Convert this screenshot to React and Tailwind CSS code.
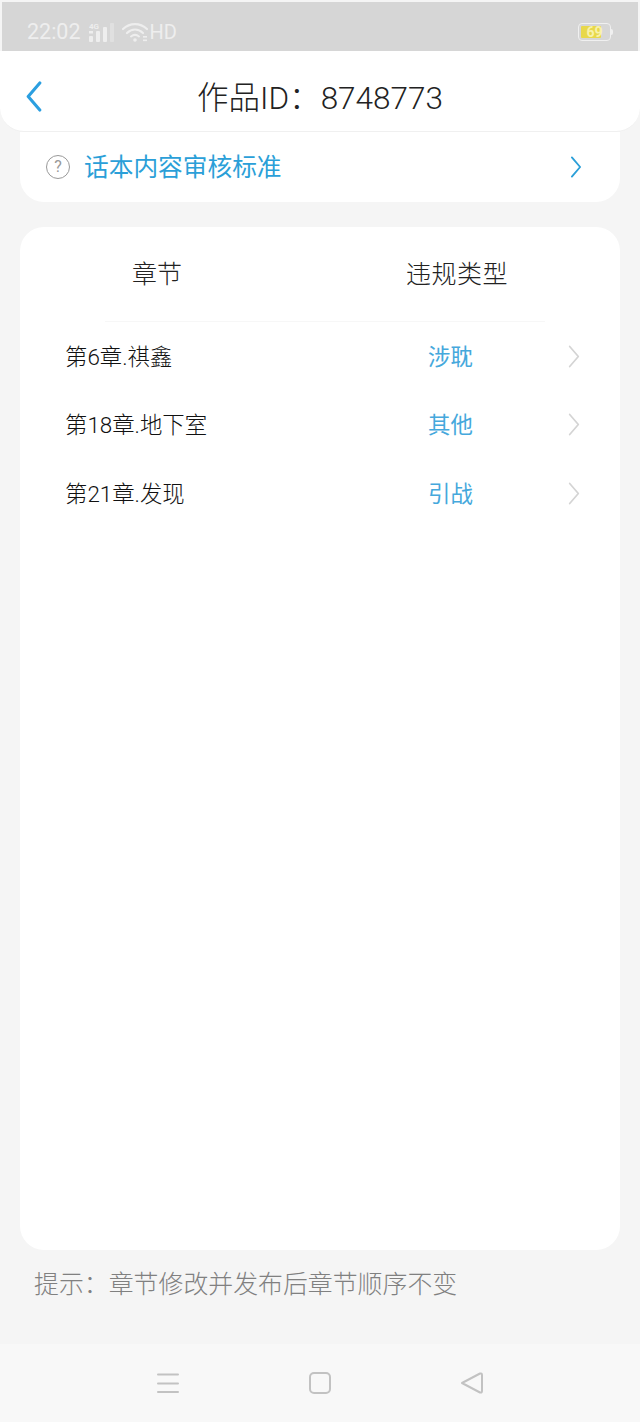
const CJK = "font-['Roboto','Noto_Sans_CJK_SC',sans-serif]";
const COLON = "\uFF1A"; // full-width colon

const rows = [
  { name: "第6章.祺鑫", type: "涉耽" },
  { name: "第18章.地下室", type: "其他" },
  { name: "第21章.发现", type: "引战" },
];

const Chevron = ({ className, dir = "right", width = 2 }) => (
  <svg viewBox="0 0 12 24" fill="none" className={className}>
    <path
      d={dir === "right" ? "M1.5 1.5 L10.5 12 L1.5 22.5" : "M10.5 1.5 L1.5 12 L10.5 22.5"}
      stroke="currentColor"
      strokeWidth={width}
      strokeLinecap="round"
      strokeLinejoin="round"
    />
  </svg>
);

const StatusBar = () => (
  <div className="mx-[2px] mt-[2px] flex h-[49px] items-center justify-between bg-[#d6d6d6] pl-[25px] pr-[25px] pt-[11px] text-[#eeeeee]">
    <div className="flex items-center">
      <span className="text-[21.5px] leading-none">22:02</span>
      <svg viewBox="0 0 26 20" className="ml-[8px] h-[20px] w-[26px]">
        <text x="0" y="7" fontSize="8" fontWeight="700" fill="currentColor" fontFamily="Roboto">4G</text>
        <rect x="0" y="9" width="4" height="2.5" fill="currentColor" />
        <rect x="0" y="14" width="4" height="6" rx="1" fill="currentColor" />
        <rect x="7" y="9" width="4" height="11" rx="1" fill="currentColor" />
        <rect x="14" y="5" width="4" height="15" rx="1" fill="currentColor" />
        <rect x="21" y="1" width="4" height="19" rx="1" fill="currentColor" opacity="0.45" />
      </svg>
      <svg viewBox="0 0 26 20" fill="none" className="ml-[7px] h-[20px] w-[26px]">
        <path d="M1 7 C8 0.5 18 0.5 25 7" stroke="currentColor" strokeWidth="2.2" strokeLinecap="round" />
        <path d="M5 11 C10 6.5 16 6.5 21 11" stroke="currentColor" strokeWidth="2.2" strokeLinecap="round" />
        <path d="M9 14.5 C11.5 12.5 14.5 12.5 17 14.5" stroke="currentColor" strokeWidth="2" strokeLinecap="round" />
        <circle cx="13" cy="18" r="1.8" fill="currentColor" />
        <rect x="21" y="14" width="4" height="1.6" fill="currentColor" />
        <rect x="21" y="17.5" width="4" height="1.6" fill="currentColor" />
      </svg>
      <span className="ml-[2px] text-[20px] leading-none">HD</span>
    </div>
    <div className="flex items-center">
      <div className="relative flex h-[18px] w-[33px] items-center justify-center overflow-hidden rounded-[4px] border border-[#f0f0f0]">
        <div className="absolute inset-y-[2px] left-[2px] w-[20px] rounded-[1px] bg-[#e8d84a]" />
        <span className="relative text-[14px] font-bold leading-none text-[#f8f2a8]">69</span>
      </div>
      <div className="h-[6px] w-[2px] rounded-r-sm bg-[#f0f0f0]" />
    </div>
  </div>
);

const Header = () => (
  <div className="relative z-10 flex h-[81px] items-center justify-center rounded-b-[24px] border-b border-[#f0f0f0] bg-white">
    <Chevron dir="left" width={2.4} className="absolute left-[25px] top-[30px] h-[31px] w-[18px] text-[#2b9fe0]" />
    <span className="pt-[15px] text-[31.5px] font-light leading-none text-[#222222]">作品ID{COLON}8748773</span>
  </div>
);

const NavBar = () => (
  <div className="mt-auto flex h-[78px] items-center justify-between bg-[#f8f8f8] pl-[156px] pr-[156px] text-[#c2c2c2]">
    <svg viewBox="0 0 24 22" fill="none" className="h-[22px] w-[24px]">
      <path d="M2 2.5 H22 M2 11.5 H22 M2 20 H22" stroke="currentColor" strokeWidth="2" strokeLinecap="round" />
    </svg>
    <div className="h-[22px] w-[22px] rounded-[5px] border-2 border-current" />
    <svg viewBox="0 0 24 24" fill="none" className="h-[24px] w-[24px]">
      <path d="M2 12 L20 2.5 Q22 2 22 4 L22 20 Q22 22 20 21.5 Z" stroke="currentColor" strokeWidth="2" strokeLinejoin="round" />
    </svg>
  </div>
);

export default function App() {
  return (
    <div className={`${CJK} flex h-[1422px] w-[640px] flex-col overflow-hidden bg-[#f5f5f5]`}>
      <StatusBar />
      <Header />

      <div className="mx-5 flex h-[70px] items-center rounded-b-[24px] bg-white pl-[26px] pr-[38px]">
        <div className="flex h-[24px] w-[24px] items-center justify-center rounded-full border border-[#999999] text-[16px] leading-none text-[#999999]">?</div>
        <span className="ml-[14px] pt-[2px] text-[24.7px] leading-none text-[#2b9fd8]">话本内容审核标准</span>
        <Chevron className="ml-auto h-[22px] w-[12px] text-[#2b9fd8]" />
      </div>

      <div className="mx-5 mt-[25px] h-[1023px] rounded-[24px] bg-white">
        <div className="ml-[85px] mr-[75px] flex h-[95px] items-center border-b border-[#f7f7f7] text-[25px] font-light leading-none text-[#222222]">
          <span className="ml-[27px]">章节</span>
          <span className="ml-[224px] tracking-[0.5px]">违规类型</span>
        </div>
        <div className="pl-[45px] pr-[40px]">
          {rows.map((row) => (
            <div key={row.name} className="flex h-[68.5px] items-center">
              <span className="w-[363px] pt-[1px] text-[22.4px] font-light leading-none text-[#111111]">{row.name}</span>
              <span className="pt-[1px] text-[22.4px] leading-none text-[#45a8dc]">{row.type}</span>
              <Chevron width={1.8} className="ml-auto h-[23px] w-[12px] text-[#d4d4d4]" />
            </div>
          ))}
        </div>
      </div>

      <div className="ml-[34px] mt-[21px] text-[24.9px] font-light leading-[28px] text-[#808080]">提示{COLON}章节修改并发布后章节顺序不变</div>

      <NavBar />
    </div>
  );
}
